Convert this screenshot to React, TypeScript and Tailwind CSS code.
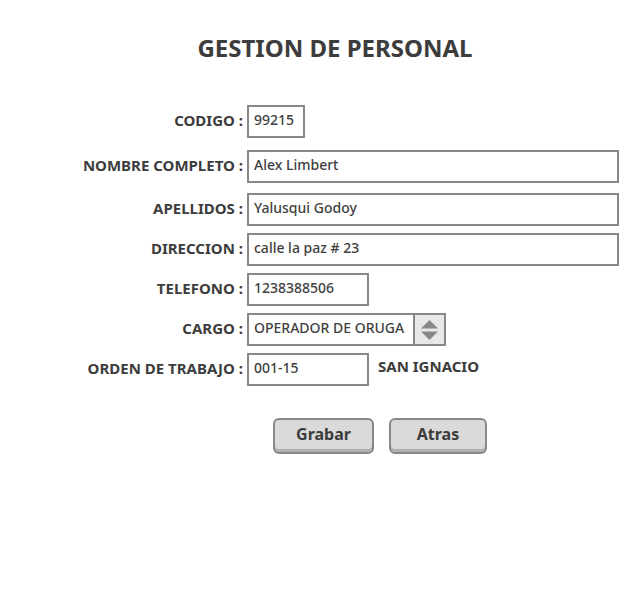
import type { ReactNode } from "react";

const field =
  "block h-[33px] border-2 border-[#888888] bg-white px-[5px] pb-[4px] text-[14px] font-medium leading-5 text-[#404040] outline-none focus:border-[#555555]";

const button =
  "h-9 rounded-md border-2 border-[#888888] bg-[#dadada] pb-1 text-[16px] leading-5 font-bold shadow-[inset_0_-3px_0_#b0b0b0] active:bg-[#cccccc]";

function Row({ id, label, children }: { id: string; label: string; children: ReactNode }) {
  return (
    <div className="flex items-center gap-1">
      <label htmlFor={id} className="w-[243px] shrink-0 pb-1 text-right text-[15px] leading-5 font-bold whitespace-nowrap">
        {label} :
      </label>
      {children}
    </div>
  );
}

export default function App() {
  return (
    <main className="min-h-screen bg-white pt-8 pr-[21px] font-['Noto_Sans','Open_Sans',sans-serif] text-[#3c3c3c]">
      <h1 className="pl-[51px] text-center text-[24px] leading-8 font-bold">GESTION DE PERSONAL</h1>
      <form className="mt-[41px]" onSubmit={(e) => e.preventDefault()}>
        <Row id="codigo" label="CODIGO">
          <input id="codigo" defaultValue="99215" className={`${field} w-[58px]`} />
        </Row>
        <div className="mt-3 flex flex-col gap-[10px]">
          <Row id="nombre" label="NOMBRE COMPLETO">
            <input id="nombre" defaultValue="Alex Limbert" className={`${field} min-w-0 flex-1`} />
          </Row>
          <Row id="apellidos" label="APELLIDOS">
            <input id="apellidos" defaultValue="Yalusqui Godoy" className={`${field} min-w-0 flex-1`} />
          </Row>
        </div>
        <div className="mt-[7px] flex flex-col gap-[7px]">
          <Row id="direccion" label="DIRECCION">
            <input id="direccion" defaultValue="calle la paz # 23" className={`${field} min-w-0 flex-1`} />
          </Row>
          <Row id="telefono" label="TELEFONO">
            <input id="telefono" defaultValue="1238388506" className={`${field} w-[122px]`} />
          </Row>
          <Row id="cargo" label="CARGO">
            <div className="relative w-[199px]">
              <select id="cargo" className={`${field} w-full appearance-none pr-8`}>
                <option>OPERADOR DE ORUGA</option>
              </select>
              <span className="pointer-events-none absolute inset-y-0 right-0 flex w-[33px] items-center justify-center border-2 border-[#888888] bg-[#e8e8e8]">
                <svg width="17" height="20" viewBox="0 0 17 20" fill="#888888" aria-hidden="true">
                  <path d="M8.500 0L17 8.500H0z" />
                  <path d="M0 11.500h17L8.500 20z" />
                </svg>
              </span>
            </div>
          </Row>
          <Row id="orden" label="ORDEN DE TRABAJO">
            <input id="orden" defaultValue="001-15" className={`${field} w-[122px]`} />
            <span className="pb-2 pl-[5px] text-[15px] leading-5 font-bold">SAN IGNACIO</span>
          </Row>
        </div>
        <div className="mt-8 flex gap-[15px] pl-[273px]">
          <button type="submit" className={`${button} w-[101px]`}>Grabar</button>
          <button type="button" className={`${button} w-[98px]`}>Atras</button>
        </div>
      </form>
    </main>
  );
}
